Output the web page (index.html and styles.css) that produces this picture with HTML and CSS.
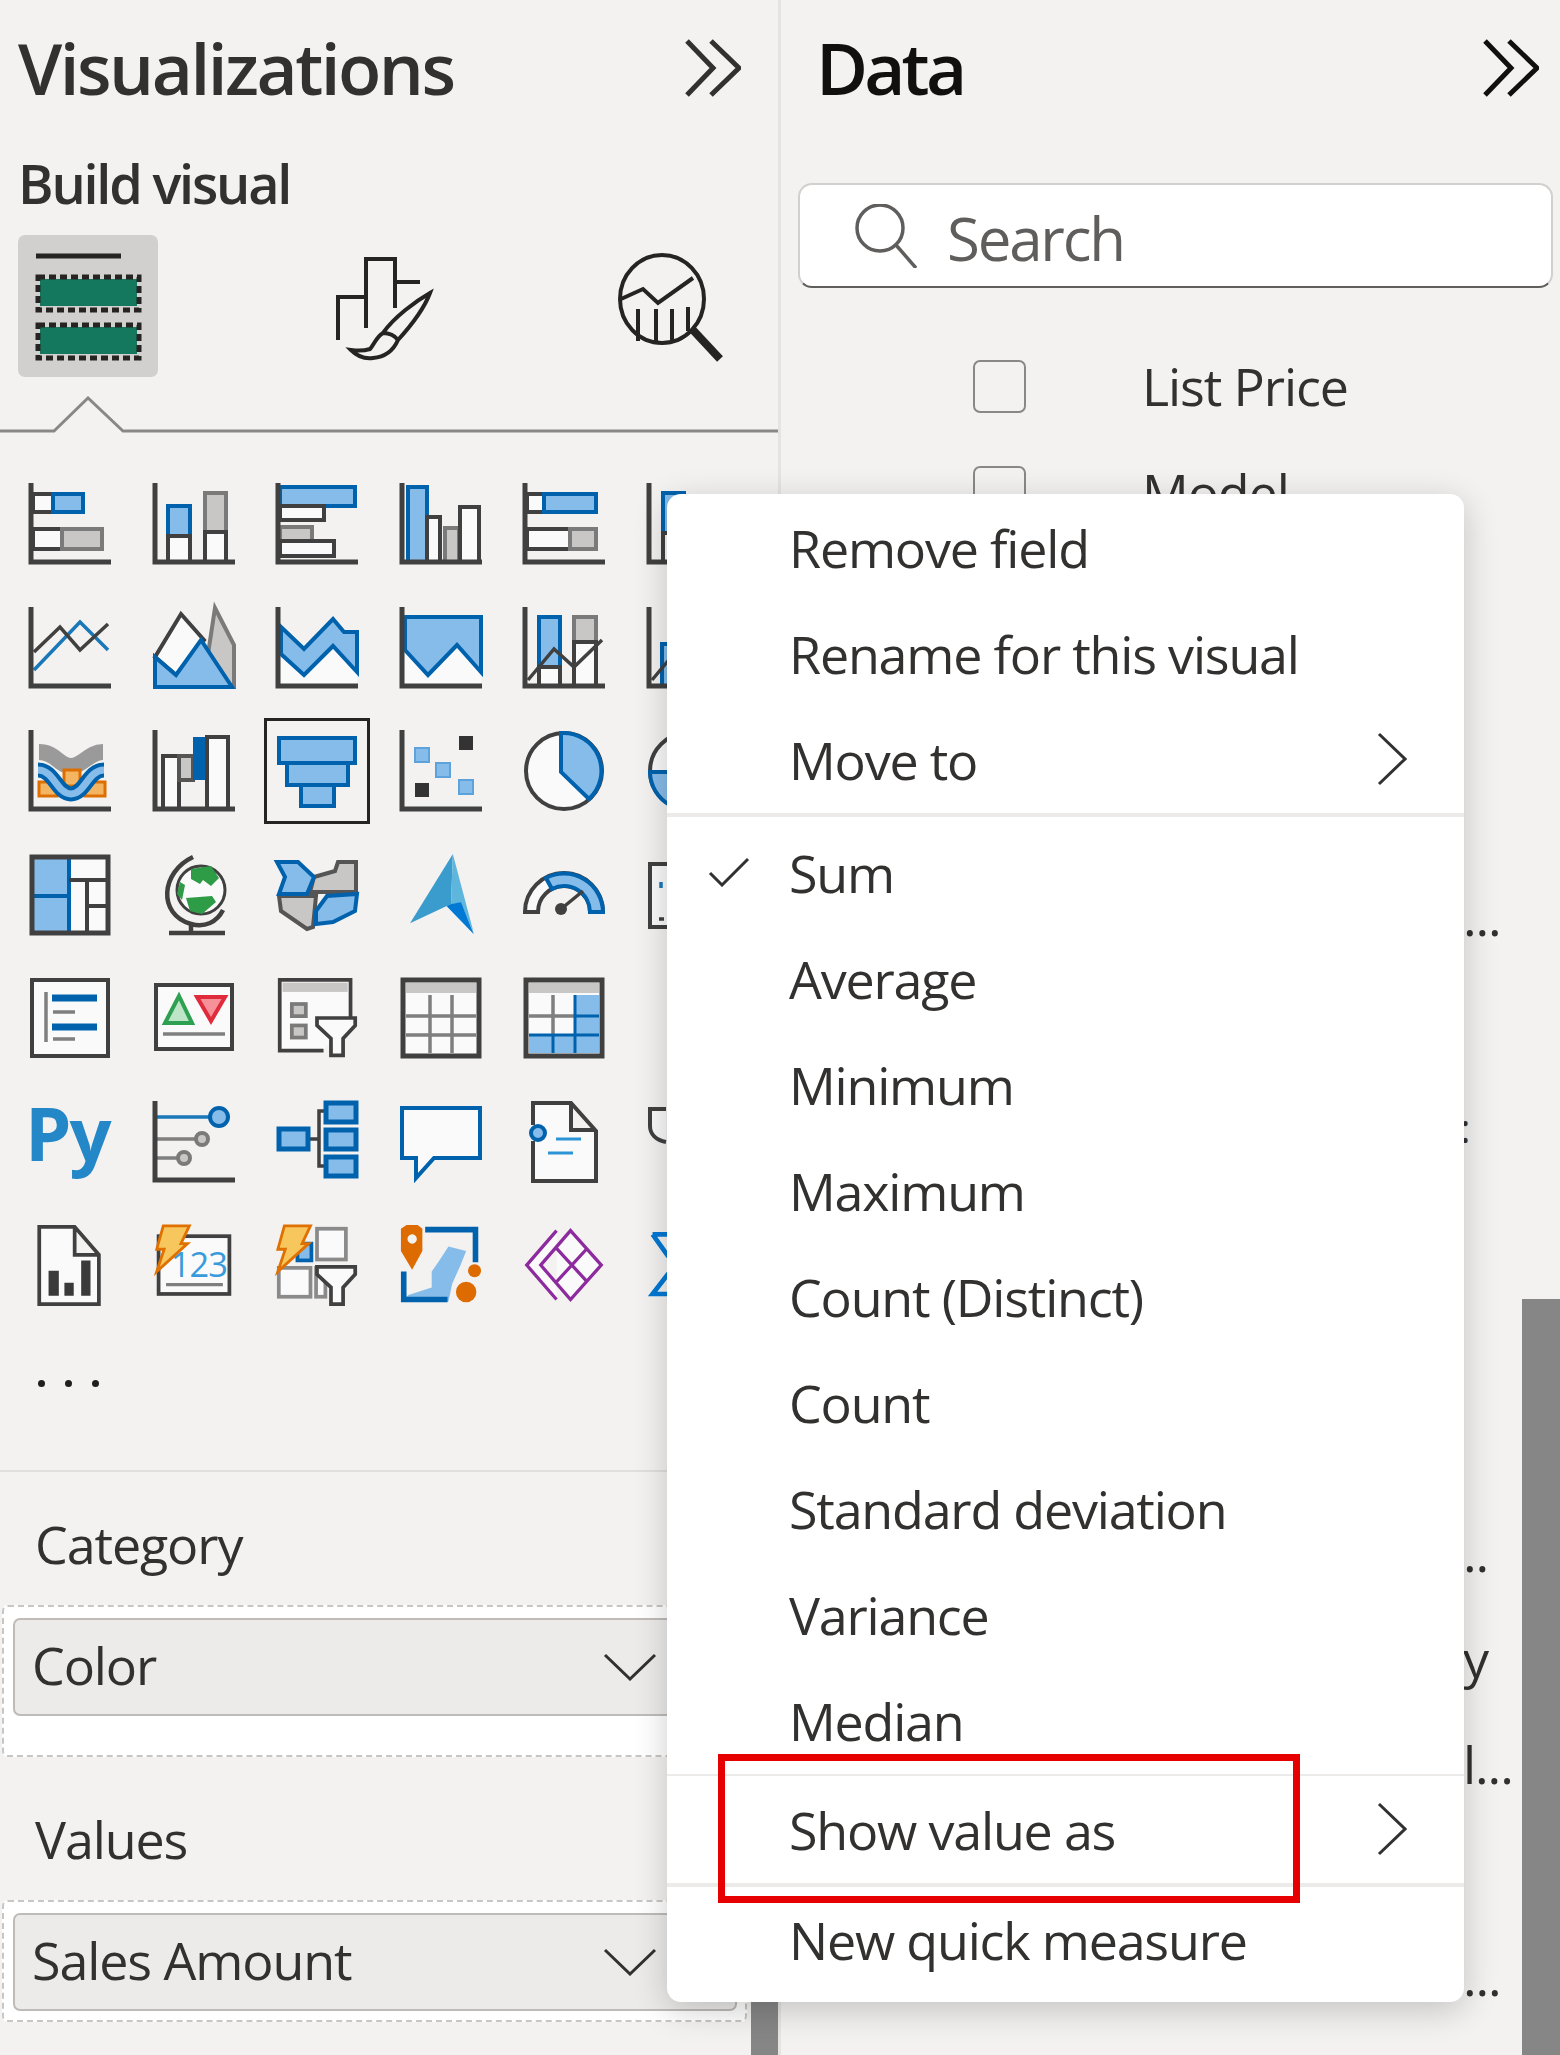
FILE: index.html
```html
<!DOCTYPE html>
<html lang="en">
<head>
    <meta charset="UTF-8">
    <meta name="viewport" content="width=device-width, initial-scale=1.0">
    <title>Visualizations and Data panes</title>
    <link rel="stylesheet" href="styles.css">
</head>
<body>
    <div class="panes">
        <section class="viz-pane">
            <header class="pane-head">
                <h1 class="pane-title">Visualizations</h1>
                <svg class="collapse" viewBox="0 0 56 58"><path d="M2 2l26 27L2 56M26 2l28 27-28 27"/></svg>
            </header>
            <h2 class="build-title">Build visual</h2>
            <div class="build-tabs">
                <div class="tile">
                    <svg viewBox="0 0 140 142" width="140" height="142">
                        <path class="tile-line" d="M18 21h85"/>
                        <rect class="tile-fill" x="22" y="44" width="97" height="27"/>
                        <rect class="tile-dash" x="20" y="42" width="101" height="33"/>
                        <rect class="tile-fill" x="22" y="92" width="97" height="27"/>
                        <rect class="tile-dash" x="20" y="90" width="101" height="33"/>
                    </svg>
                </div>
                <svg class="tab-icon tab-paint" viewBox="0 0 100 104" width="100" height="104">
                    <path d="M2 83V40h28V2h29v49M59 25h25M30 40v31"/>
                    <path d="M47 76C58 60 80 44 94 36 88 52 72 72 62 83M47 76c-7 4-9 12-13 16-6 2-12 2-19 1 7 7 15 9 22 8 13-1 21-9 25-18-3-4-9-7-15-7z"/>
                </svg>
                <svg class="tab-icon tab-search" viewBox="0 0 108 112" width="108" height="112">
                    <ellipse cx="44" cy="48" rx="42" ry="44"/>
                    <path d="M3 48l22-10 15 14 35-25M20 58v32M38 58v34M54 58v32M70 56v24"/>
                    <path class="thick" d="M74 78l28 30"/>
                </svg>
            </div>
            <svg class="tab-rule" viewBox="0 0 778 38" width="778" height="38"><path d="M0 35h54l34-33 35 33h655"/></svg>

            <div class="viz-grid">
                <svg class="viz" viewBox="0 0 82 82"><rect class="wh" x="4" y="11" width="20" height="18"/><rect class="bl" x="24" y="11" width="30" height="18"/><rect class="wh" x="4" y="46" width="30" height="20"/><rect class="gr" x="33" y="46" width="40" height="20"/><path class="ax" d="M2 0v79h80"/></svg>
                <svg class="viz" viewBox="0 0 82 82"><rect class="bl" x="15" y="23" width="22" height="30"/><rect class="wh" x="15" y="53" width="22" height="26"/><rect class="gr" x="52" y="10" width="21" height="39"/><rect class="wh" x="52" y="49" width="21" height="30"/><path class="ax" d="M2 0v79h80"/></svg>
                <svg class="viz" viewBox="0 0 82 82"><rect class="bl" x="4" y="4" width="75" height="19"/><rect class="wh" x="4" y="23" width="44" height="14"/><rect class="gr" x="4" y="44" width="32" height="14"/><rect class="wh" x="4" y="58" width="54" height="15"/><path class="ax" d="M2 0v79h80"/></svg>
                <svg class="viz" viewBox="0 0 82 82"><rect class="bl" x="8" y="4" width="19" height="75"/><rect class="wh" x="27" y="34" width="13" height="45"/><rect class="gr" x="45" y="45" width="14" height="34"/><rect class="wh" x="60" y="24" width="19" height="55"/><path class="ax" d="M2 0v79h80"/></svg>
                <svg class="viz" viewBox="0 0 82 82"><rect class="wh" x="4" y="11" width="17" height="18"/><rect class="bl" x="21" y="11" width="52" height="18"/><rect class="wh" x="4" y="46" width="43" height="20"/><rect class="gr" x="47" y="46" width="26" height="20"/><path class="ax" d="M2 0v79h80"/></svg>
                <svg class="viz" viewBox="0 0 82 82"><rect class="bl" x="16" y="10" width="21" height="40"/><rect class="wh" x="16" y="50" width="21" height="29"/><path class="ax" d="M2 0v79h80"/></svg>

                <svg class="viz" viewBox="0 0 82 82"><path class="ln-b" d="M5 63L51 15l28 28"/><path class="ln-k" d="M5 45l26-25 20 23 28-26"/><path class="ax" d="M2 0v79h80"/></svg>
                <svg class="viz" viewBox="0 0 82 82"><path class="gr" d="M62 1l19 37v42H50z"/><path class="wh" d="M2 50L28 7l23 26-28 35z"/><path class="bl" d="M2 50l21 18 25-35 31 47H2z"/></svg>
                <svg class="viz" viewBox="0 0 82 82"><path class="wh no-line" d="M5 47l23 21 29-29 24 26v15H5z"/><path class="bl" d="M5 20l23 22 29-30 11 13h13v40L57 39 28 68 5 47z"/><path class="ax" d="M2 0v79h80"/></svg>
                <svg class="viz" viewBox="0 0 82 82"><path class="wh no-line" d="M5 43l23 25 29-30 24 27v14H5z"/><path class="bl" d="M5 10h76v55L57 38 28 68 5 43z"/><path class="ax" d="M2 0v79h80"/></svg>
                <svg class="viz" viewBox="0 0 82 82"><rect class="bl" x="16" y="10" width="21" height="50"/><rect class="wh" x="16" y="60" width="21" height="19"/><rect class="gr" x="51" y="10" width="22" height="25"/><rect class="wh" x="51" y="35" width="22" height="44"/><path class="ln-k" d="M5 73l26-31 20 18 28-27"/><path class="ax" d="M2 0v79h80"/></svg>
                <svg class="viz" viewBox="0 0 82 82"><rect class="bl" x="15" y="37" width="21" height="42"/><path class="ln-k" d="M5 73l26-31"/><path class="ax" d="M2 0v79h80"/></svg>

                <svg class="viz" viewBox="0 0 82 82"><path class="ribbon-gray" d="M10 22c16 0 20 14 32 14s18-14 32-14"/><rect class="ribbon-orange" x="10" y="52" width="18" height="14"/><rect class="ribbon-orange" x="35" y="40" width="16" height="16"/><rect class="ribbon-orange" x="56" y="52" width="20" height="14"/><path class="ribbon-blue" d="M9 40c16 0 19 24 33 24s17-24 33-24"/><path class="ribbon-light" d="M9 40c16 0 19 24 33 24s17-24 33-24"/><path class="ax" d="M2 0v79h80"/></svg>
                <svg class="viz" viewBox="0 0 82 82"><rect class="wh" x="10" y="26" width="16" height="53"/><rect class="gr dark-edge" x="26" y="26" width="14" height="24"/><rect class="solid-b" x="40" y="7" width="14" height="43"/><rect class="wh" x="54" y="7" width="21" height="72"/><path class="ax" d="M2 0v79h80"/></svg>
                <svg class="viz selected" viewBox="0 0 82 82"><rect class="bl" x="3" y="8" width="76" height="25"/><rect class="bl" x="11" y="33" width="61" height="22"/><rect class="bl" x="25" y="55" width="33" height="21"/></svg>
                <svg class="viz" viewBox="0 0 82 82"><rect class="sq-k" x="59" y="6" width="14" height="14"/><rect class="sq-b" x="15" y="18" width="14" height="14"/><rect class="sq-b" x="36" y="33" width="14" height="14"/><rect class="sq-k" x="15" y="53" width="14" height="14"/><rect class="sq-b" x="59" y="50" width="14" height="14"/><path class="ax" d="M2 0v79h80"/></svg>
                <svg class="viz" viewBox="0 0 82 82"><circle class="wh" cx="41" cy="41" r="38"/><path class="bl" d="M38 3a38 38 0 0 1 28 66L38 42z"/></svg>
                <svg class="viz" viewBox="0 0 82 82"><circle class="wh" cx="41" cy="41" r="38"/><path class="bl" d="M3 42a38 38 0 0 0 20 33V42z"/></svg>

                <svg class="viz" viewBox="0 0 82 82"><rect class="wh" x="3" y="3" width="76" height="76"/><rect class="bl" x="3" y="3" width="37" height="39"/><rect class="bl" x="3" y="42" width="37" height="37"/><path class="wh" d="M40 26h39M58 26v53M58 52h21"/><rect class="frame" x="3" y="3" width="76" height="76"/></svg>
                <svg class="viz" viewBox="0 0 82 82"><circle class="wh thin" cx="48" cy="36" r="24"/><path class="globe-land" d="M38 15l20-3 8 12-8 8-8-6-3 4-9-5zM27 28l5 3-3 15-5-6zM33 44l26-2 4 6-14 12-12-3z"/><path class="ln-k thick-k" d="M40 3C8 18 4 60 38 70c14 4 26-2 32-14M38 70v9M16 79h56"/></svg>
                <svg class="viz" viewBox="0 0 82 82"><path class="gr dark-edge" d="M38 23l21-6 3-9h18v30H34zM3 42h37l-3 31-6 2L5 57z"/><path class="bl" d="M1 8h21l16 15-7 17H3l6-17zM51 42l30-2-2 17-22 11-17 2V57z"/></svg>
                <svg class="viz" viewBox="0 0 82 90"><path class="az-a" d="M54 0L7 76l45-21z"/><path class="az-b" d="M54 0l-2 55 11-1 14 33z"/><path class="az-c" d="M52 55l11-2 14 35-30-31z"/></svg>
                <svg class="viz" viewBox="0 0 82 82"><path class="wh" d="M2 58a39 39 0 0 1 78 0H67a26 26 0 0 0-52 0z"/><path class="bl" d="M23 24a39 39 0 0 1 57 34H67a26 26 0 0 0-38-23z"/><path class="ln-k" d="M38 55l22-18"/><circle class="hub" cx="38" cy="55" r="6"/></svg>
                <svg class="viz" viewBox="0 0 82 82"><rect class="wh" x="3" y="10" width="76" height="63"/><path class="ln-b" d="M14 28v6"/><path class="ln-k" d="M12 65h5"/></svg>

                <svg class="viz" viewBox="0 0 82 82"><rect class="wh" x="3" y="3" width="76" height="76"/><path class="line-gray" d="M17 15v50"/><path class="line-blue" d="M23 21h45M23 50h45"/><path class="line-gray" d="M24 35h22M24 62h22"/></svg>
                <svg class="viz" viewBox="0 0 82 82"><rect class="wh" x="3" y="8" width="76" height="64"/><path class="tri-g" d="M26 19l13 27H12z"/><path class="tri-r" d="M44 20h28L58 44z"/><path class="line-gray" d="M10 57h62"/></svg>
                <svg class="viz" viewBox="0 0 86 88"><path class="wh" d="M79 44V3H3v76h47"/><rect class="gr no-line" x="6" y="6" width="70" height="10"/><rect class="gr" x="16" y="29" width="15" height="13"/><rect class="gr" x="16" y="52" width="15" height="13"/><path class="wh" d="M43 44h41v8L71 66v18H58V66L43 52z"/></svg>
                <svg class="viz" viewBox="0 0 82 82"><rect class="wh" x="3" y="3" width="76" height="76"/><rect class="gr no-line" x="6" y="6" width="70" height="10"/><path class="line-gray" d="M30 18v58M52 18v58M6 39h70M6 58h70"/><rect class="frame" x="3" y="3" width="76" height="76"/></svg>
                <svg class="viz" viewBox="0 0 82 82"><rect class="wh" x="3" y="3" width="76" height="76"/><rect class="gr no-line" x="6" y="6" width="70" height="10"/><path class="bl no-line" d="M52 18h24v58H6V58h46z"/><path class="line-gray" d="M30 18v40M6 39h46"/><path class="line-blue thin" d="M30 58v18M52 18v58M52 39h24M6 58h70"/><rect class="frame" x="3" y="3" width="76" height="76"/></svg>
                <div class="viz-gap"></div>

                <svg class="viz" viewBox="0 0 82 82"><text class="py" x="-4" y="60">Py</text></svg>
                <svg class="viz" viewBox="0 0 82 82"><path class="ln-b" d="M4 16h52"/><circle class="bl" cx="66" cy="16" r="9"/><path class="line-gray" d="M4 38h40M4 57h22"/><circle class="gr" cx="49" cy="38" r="6"/><circle class="gr" cx="31" cy="57" r="6"/><path class="ax" d="M2 0v79h80"/></svg>
                <svg class="viz" viewBox="0 0 82 82"><path class="ln-k" d="M32 38h11M50 10h-7v55h7"/><rect class="bl thick-b" x="3" y="28" width="29" height="20"/><rect class="bl thick-b" x="50" y="2" width="30" height="19"/><rect class="bl thick-b" x="50" y="29" width="30" height="19"/><rect class="bl thick-b" x="50" y="56" width="30" height="19"/></svg>
                <svg class="viz" viewBox="0 0 82 82"><path class="wh blue-line" d="M2 7h78v50H34L16 77V57H2z"/></svg>
                <svg class="viz" viewBox="0 0 82 82"><path class="wh" d="M10 24V2h38l25 28v50H10V40M48 2v27h25"/><circle class="bl" cx="15" cy="32" r="7"/><path class="ln-s" d="M33 38h25M25 52h25"/></svg>
                <svg class="viz" viewBox="0 0 82 82"><path class="wh" d="M19 8H3v17c0 8 6 14 16 16"/></svg>

                <svg class="viz" viewBox="0 0 82 88"><path class="wh" d="M8 2h38l26 30v53H8zM46 2v30h26"/><path class="report-bar" d="M18 49h11v27H18zM35 62h10v14H35zM53 38h10v38H53z"/></svg>
                <svg class="viz" viewBox="0 0 82 88"><rect class="wh" x="3" y="12" width="76" height="62"/><text class="card-num" x="16" y="56">123</text><path class="line-gray" d="M11 64h61"/><path class="bolt" d="M8 1h28l-9 19h7L1 50l8-24H1z"/></svg>
                <svg class="viz" viewBox="0 0 86 88"><rect class="gr pale" x="43" y="4" width="31" height="33"/><rect class="gr pale" x="2" y="46" width="34" height="31"/><rect class="bl" x="22" y="20" width="15" height="18"/><rect class="gr pale" x="42" y="46" width="10" height="31"/><path class="wh" d="M43 45h41v8L71 67v18H58V67L43 53z"/><path class="bolt" d="M8 1h28l-9 19h7L1 50l8-24H1z"/></svg>
                <svg class="viz" viewBox="0 0 86 88"><path class="map-land" d="M33 67V50l7-10 11-17 19 5-6 15-9 20-4 19H1l7-7z"/><path class="map-edge" d="M26 5h54v35M3 50v30h47"/><path class="pin" d="M6 0h12l5 4v24L12 48 0 28V4zM12 10a5 5 0 1 0 .1 0z"/><circle class="dot-o" cx="79" cy="49" r="7"/><circle class="dot-o" cx="70" cy="72" r="11"/></svg>
                <svg class="viz" viewBox="0 0 82 88"><path class="apps" d="M33 6L1 43l32 37M48 6l33 37-33 37-32-37zM32 24l33 36M65 26L32 62"/></svg>
                <svg class="viz" viewBox="0 0 82 88"><path class="sigma" d="M3 10h17M3 10l17 24M20 52L3 74h17"/></svg>
            </div>
            <div class="more-dots"><i></i><i></i><i></i></div>

            <div class="well-section">
                <h3 class="well-label">Category</h3>
                <div class="well well-tall">
                    <div class="well-pill"><span>Color</span>
                        <svg class="pill-caret" viewBox="0 0 54 28"><path d="M2 2l25 24L52 2"/></svg>
                    </div>
                </div>
                <h3 class="well-label values-label">Values</h3>
                <div class="well">
                    <div class="well-pill"><span>Sales Amount</span>
                        <svg class="pill-caret" viewBox="0 0 54 28"><path d="M2 2l25 24L52 2"/></svg>
                    </div>
                </div>
            </div>
            <div class="viz-thumb"></div>
        </section>

        <section class="data-pane">
            <header class="pane-head data-head">
                <h1 class="pane-title data-title">Data</h1>
                <svg class="collapse dark" viewBox="0 0 56 58"><path d="M2 2l26 27L2 56M26 2l28 27-28 27"/></svg>
            </header>
            <div class="search">
                <svg class="search-icon" viewBox="0 0 62 64" width="62" height="64"><circle cx="25" cy="24" r="23"/><path d="M41 41l20 23"/></svg>
                <span>Search</span>
            </div>
            <div class="field-list">
                <div class="field-row"><span class="check"></span><span>List Price</span></div>
                <div class="field-row"><span class="check"></span><span>Model</span></div>
                <div class="field-row"></div>
                <div class="field-row"></div>
                <div class="field-row"></div>
                <div class="field-row tail"><span>...</span></div>
                <div class="field-row"></div>
                <div class="field-row tail colon"><span>:</span></div>
                <div class="field-row"></div>
                <div class="field-row"></div>
                <div class="field-row"></div>
                <div class="field-row tail"><span>..</span></div>
                <div class="field-row tail"><span>y</span></div>
                <div class="field-row tail"><span>l...</span></div>
                <div class="field-row"></div>
                <div class="field-row tail"><span>...</span></div>
            </div>
            <div class="data-thumb"></div>
        </section>
    </div>

    <div class="menu">
        <div class="menu-item"><span class="tick"></span>Remove field</div>
        <div class="menu-item"><span class="tick"></span>Rename for this visual</div>
        <div class="menu-item"><span class="tick"></span>Move to
            <svg class="sub-arrow" viewBox="0 0 30 54"><path d="M2 2l26 25L2 52"/></svg>
        </div>
        <div class="menu-sep first"></div>
        <div class="menu-item"><span class="tick"><svg viewBox="0 0 42 30" width="42" height="30"><path d="M2 16l12 12L40 2"/></svg></span>Sum</div>
        <div class="menu-item"><span class="tick"></span>Average</div>
        <div class="menu-item"><span class="tick"></span>Minimum</div>
        <div class="menu-item"><span class="tick"></span>Maximum</div>
        <div class="menu-item"><span class="tick"></span>Count (Distinct)</div>
        <div class="menu-item"><span class="tick"></span>Count</div>
        <div class="menu-item"><span class="tick"></span>Standard deviation</div>
        <div class="menu-item"><span class="tick"></span>Variance</div>
        <div class="menu-item"><span class="tick"></span>Median</div>
        <div class="menu-sep thin"></div>
        <div class="menu-item"><span class="tick"></span>Show value as
            <svg class="sub-arrow" viewBox="0 0 30 54"><path d="M2 2l26 25L2 52"/></svg>
        </div>
        <div class="menu-sep"></div>
        <div class="menu-item"><span class="tick"></span>New quick measure</div>
    </div>
    <div class="callout"></div>
</body>
</html>
```

FILE: styles.css
```css
* {
    box-sizing: border-box;
}
html, body {
    margin: 0;
    height: 2055px;
    overflow: hidden;
}
body {
    position: relative;
    background-color: #f3f2f1;
    color: #323130;
    font-family: "Open Sans", "Noto Sans", sans-serif;
}
h1, h2, h3 {
    margin: 0;
    font-weight: 400;
}
.panes {
    display: flex;
    height: 2055px;
}

/* left pane */
.viz-pane {
    position: relative;
    width: 778px;
    flex: none;
    overflow: hidden;
}
.pane-head {
    display: flex;
    align-items: center;
    justify-content: space-between;
    height: 136px;
    padding: 0 37px 0 18px;
}
.pane-title {
    font-size: 71px;
    font-weight: 600;
    line-height: 136px;
    letter-spacing: -2.5px;
    color: #323130;
}
.collapse {
    width: 56px;
    height: 58px;
    fill: none;
    stroke: #323130;
    stroke-width: 5;
}
.collapse.dark {
    stroke: #11100f;
}
.build-title {
    height: 99px;
    padding-left: 18px;
    font-size: 54px;
    font-weight: 600;
    line-height: 95px;
    letter-spacing: -2.2px;
}
.build-tabs {
    display: flex;
    align-items: flex-start;
    height: 162px;
    padding-left: 18px;
}
.tile {
    width: 140px;
    height: 142px;
    background-color: #d2d0ce;
    border-radius: 7px;
}
.tile-line {
    stroke: #252423;
    stroke-width: 5;
}
.tile-fill {
    fill: #14785f;
}
.tile-dash {
    fill: none;
    stroke: #252423;
    stroke-width: 5;
    stroke-dasharray: 7 4;
}
.tab-icon {
    flex: none;
    fill: none;
    stroke: #252423;
    stroke-width: 4;
}
.tab-paint {
    margin: 22px 0 0 178px;
}
.tab-search {
    margin: 16px 0 0 182px;
}
.tab-search .thick {
    stroke-width: 8;
}
.tab-rule {
    display: block;
    margin-top: -1px;
    fill: none;
    stroke: #8a8886;
    stroke-width: 3;
}
.viz-grid {
    display: grid;
    grid-template-columns: repeat(6, 82px);
    grid-auto-rows: 82px;
    column-gap: 41.6px;
    row-gap: 41.6px;
    margin-top: 49px;
    padding-left: 29px;
}
.viz {
    display: block;
    width: 82px;
    height: 82px;
    overflow: visible;
}
.viz.selected {
    outline: 3px solid #252423;
    outline-offset: 9px;
}
.ax {
    fill: none;
    stroke: #404040;
    stroke-width: 5;
}
.wh {
    fill: #fafafa;
    stroke: #404040;
    stroke-width: 4;
}
.bl {
    fill: #86bcea;
    stroke: #0062ad;
    stroke-width: 4;
}
.gr {
    fill: #c8c7c6;
    stroke: #7a7a7a;
    stroke-width: 4;
}
.no-line {
    stroke: none;
}
.dark-edge {
    stroke: #555;
}
.pale {
    fill: #fafafa;
    stroke: #8a8a8a;
}
.blue-line {
    stroke: #0062ad;
}
.thick-b {
    stroke-width: 5;
}
.solid-b {
    fill: #0062ad;
}
.frame {
    fill: none;
    stroke: #404040;
    stroke-width: 5;
}
.ln-k {
    fill: none;
    stroke: #404040;
    stroke-width: 3.5;
}
.ln-k.thick-k {
    stroke-width: 4.5;
}
.ln-b {
    fill: none;
    stroke: #1a78b8;
    stroke-width: 3.5;
}
.ln-s {
    fill: none;
    stroke: #2b93d6;
    stroke-width: 3;
}
.sq-k {
    fill: #333;
}
.sq-b {
    fill: #86bcea;
    stroke: #5da2da;
    stroke-width: 2;
}
.ribbon-gray {
    fill: none;
    stroke: #9a9a9a;
    stroke-width: 16;
}
.ribbon-orange {
    fill: #f3b562;
    stroke: #dd6f00;
    stroke-width: 3;
}
.ribbon-blue {
    fill: none;
    stroke: #0062ad;
    stroke-width: 15;
}
.ribbon-light {
    fill: none;
    stroke: #86bcea;
    stroke-width: 7;
}
.globe-land {
    fill: #2e9b46;
}
.thin {
    stroke-width: 3;
}
.az-a {
    fill: #3a9ccd;
}
.az-b {
    fill: #5fb6dc;
}
.az-c {
    fill: #0078d4;
}
.hub {
    fill: #404040;
}
.line-gray {
    fill: none;
    stroke: #7f7f7f;
    stroke-width: 3.5;
}
.line-blue {
    fill: none;
    stroke: #0062ad;
    stroke-width: 7;
}
.line-blue.thin {
    stroke-width: 3;
}
.tri-g {
    fill: #bfe5c8;
    stroke: #2ea052;
    stroke-width: 4;
}
.tri-r {
    fill: #f6919a;
    stroke: #e02b3c;
    stroke-width: 4;
}
.py {
    font-size: 74px;
    font-weight: 700;
    fill: #2488c8;
    letter-spacing: -2px;
}
.report-bar {
    fill: #3a3a3a;
}
.card-num {
    font-family: "Open Sans", sans-serif;
    font-size: 37px;
    fill: #3a9bdc;
    letter-spacing: -1px;
}
.bolt {
    fill: #f7c75d;
    stroke: #e07000;
    stroke-width: 3;
}
.map-edge {
    fill: none;
    stroke: #0062ad;
    stroke-width: 6;
}
.map-land {
    fill: #86bcea;
}
.pin {
    fill: #dd6b00;
    fill-rule: evenodd;
}
.dot-o {
    fill: #dd6b00;
}
.apps {
    fill: #fafafa;
    stroke: #8c2a9e;
    stroke-width: 3.5;
}
.sigma {
    fill: none;
    stroke: #0078d4;
    stroke-width: 5;
}
.viz-gap {
    height: 82px;
}
.more-dots {
    display: flex;
    gap: 20px;
    margin: 29px 0 0 38px;
    height: 134px;
}
.more-dots i {
    width: 7px;
    height: 7px;
    margin-top: 44px;
    border-radius: 50%;
    background-color: #201f1e;
}
.well-section {
    border-top: 2px solid #e1dfdd;
    padding-top: 31px;
    padding-left: 2px;
}
.well-label {
    height: 102px;
    padding-left: 33px;
    font-size: 52px;
    line-height: 82px;
    letter-spacing: -1.1px;
}
.values-label {
    margin-top: 41px;
}
.well {
    width: 745px;
    height: 122px;
    padding: 11px 8px 0 9px;
    background-color: #fff;
    border: 2px dashed #c8c6c4;
    border-radius: 6px;
}
.well-tall {
    height: 152px;
}
.well-pill {
    display: flex;
    align-items: center;
    justify-content: space-between;
    height: 98px;
    padding: 0 10px 0 17px;
    font-size: 52px;
    letter-spacing: -1.1px;
    background-color: #edebe9;
    border: 2px solid #bebbb8;
    border-radius: 7px;
}
.well-pill span {
    margin-top: -4px;
}
.pill-caret {
    width: 54px;
    height: 28px;
    margin-right: 68px;
    fill: none;
    stroke: #323130;
    stroke-width: 3;
}
.viz-thumb {
    position: absolute;
    right: 0;
    bottom: 0;
    width: 27px;
    height: 53px;
    background-color: #868686;
}

/* right pane */
.data-pane {
    position: relative;
    flex: 1;
    border-left: 3px solid #e6e4e2;
    overflow: hidden;
}
.data-head {
    padding: 0 21px 0 35px;
}
.data-title {
    letter-spacing: -3.8px;
    color: #11100f;
}
.search {
    display: flex;
    align-items: center;
    width: 755px;
    height: 105px;
    margin: 47px 0 0 17px;
    padding: 5px 0 0 55px;
    font-size: 60px;
    letter-spacing: -2.2px;
    color: #605e5c;
    background-color: #fff;
    border: 2px solid #d2d0ce;
    border-bottom-color: #605e5c;
    border-radius: 14px;
}
.search span {
    margin-left: 30px;
}
.search-icon {
    flex: none;
    margin-top: -5px;
    fill: none;
    stroke: #605e5c;
    stroke-width: 3.5;
}
.field-list {
    margin-top: 45px;
}
.field-row {
    display: flex;
    align-items: center;
    height: 106px;
    padding-left: 192px;
    font-size: 52px;
    letter-spacing: -1.1px;
}
.field-row span:last-child {
    margin-top: -2px;
}
.field-row.tail {
    padding-left: 682px;
}
.field-row.colon {
    padding-left: 679px;
    font-size: 40px;
}
.check {
    width: 53px;
    height: 53px;
    margin-right: 116px;
    border: 2px solid #8a8886;
    border-radius: 7px;
}
.data-thumb {
    position: absolute;
    right: 0;
    top: 1299px;
    bottom: 0;
    width: 38px;
    background-color: #868686;
}

/* context menu */
.menu {
    position: absolute;
    top: 494px;
    left: 667px;
    width: 797px;
    height: 1508px;
    padding-top: 1px;
    background-color: #fff;
    border-radius: 14px;
    box-shadow: 0 8px 34px rgba(0, 0, 0, 0.2);
}
.menu-item {
    display: flex;
    align-items: center;
    height: 106px;
    padding-bottom: 2px;
    font-size: 52px;
    letter-spacing: -1.2px;
    color: #323130;
}
.tick {
    display: flex;
    flex: none;
    align-items: center;
    width: 122px;
    padding-left: 41px;
    fill: none;
    stroke: #323130;
    stroke-width: 3;
}
.sub-arrow {
    width: 30px;
    height: 54px;
    margin: 0 57px 0 auto;
    fill: none;
    stroke: #323130;
    stroke-width: 3;
}
.menu-sep {
    height: 4px;
    background-color: #edebe9;
}
.menu-sep.first {
    margin-bottom: 3px;
}
.menu-sep.thin {
    height: 2px;
    margin-bottom: 1px;
}
.callout {
    position: absolute;
    top: 1754px;
    left: 718px;
    width: 582px;
    height: 149px;
    border: 7px solid #e60000;
}
```
